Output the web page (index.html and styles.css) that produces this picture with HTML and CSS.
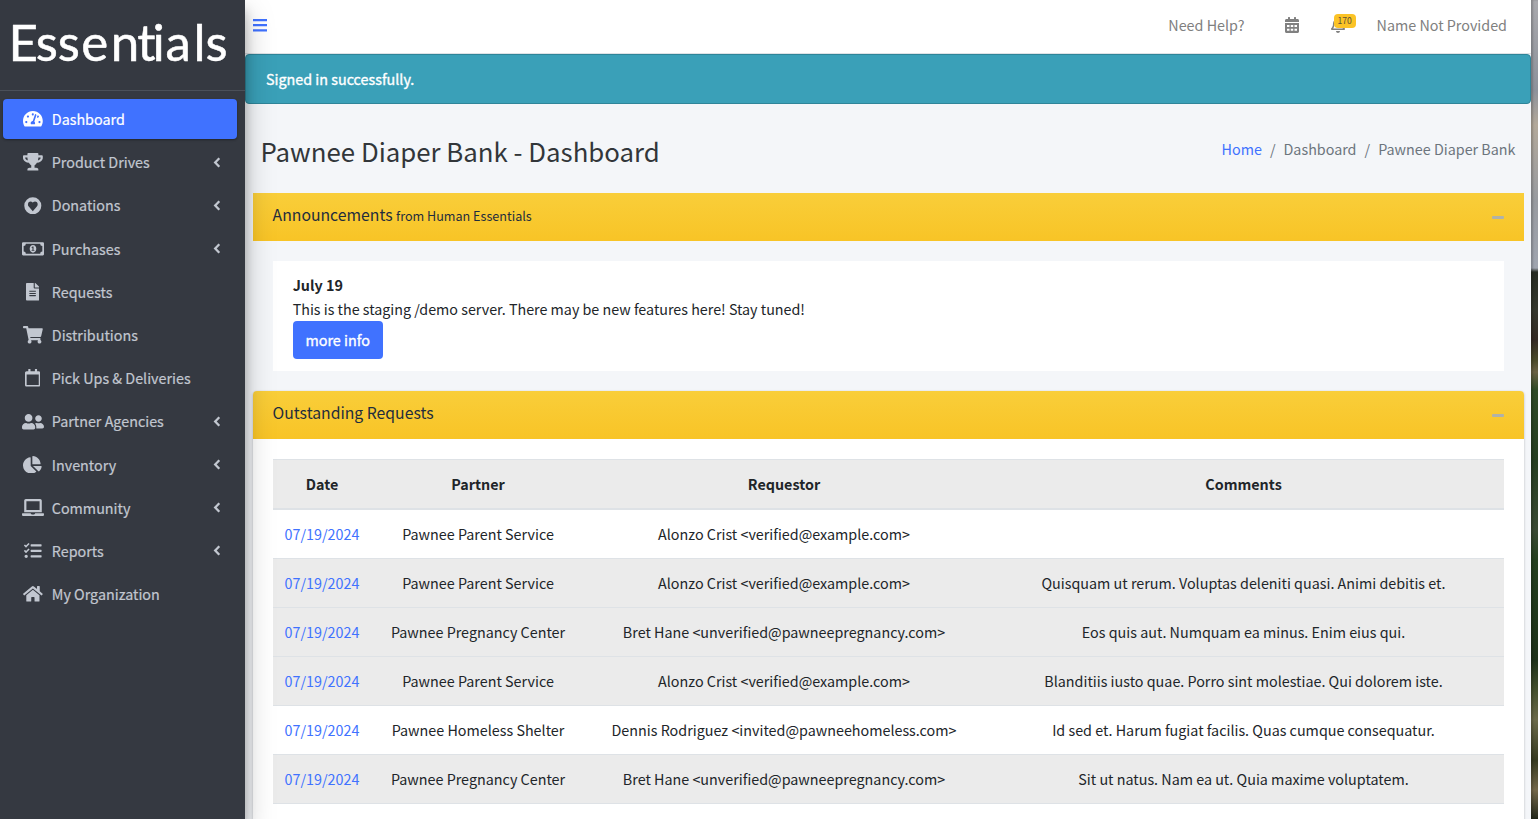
FILE: index.html
```html
<!DOCTYPE html>
<html lang="en">
<head>
<meta charset="utf-8">
<title>Pawnee Diaper Bank - Dashboard</title>
<link rel="stylesheet" href="styles.css">
</head>
<body>
<div class="app">
  <aside class="sidebar">
    <div class="brand">
      <svg class="logo" width="220" height="60" viewBox="0 0 220 60"><text y="47.500" x="0.500 27.700 49.700 73.200 102.800 129.200 144.500 157.500 185.500 197.600">Essentials</text></svg>
    </div>
    <nav class="menu">
      <a class="item active"><span class="ico"><svg viewBox="0 0 576 512"><path d="M288 32C128.940 32 0 160.940 0 320c0 52.800 14.250 102.260 39.060 144.800 5.610 9.620 16.300 15.200 27.440 15.200h443c11.140 0 21.830-5.580 27.440-15.200C561.750 422.260 576 372.800 576 320c0-159.060-128.940-288-288-288zm0 64c14.710 0 26.580 10.130 30.320 23.650-1.110 2.260-2.640 4.230-3.450 6.670l-9.220 27.670c-5.130 3.490-10.970 6.010-17.640 6.010-17.670 0-32-14.330-32-32S270.330 96 288 96zM96 384c-17.670 0-32-14.330-32-32s14.330-32 32-32 32 14.330 32 32-14.330 32-32 32zm48-160c-17.670 0-32-14.330-32-32s14.330-32 32-32 32 14.330 32 32-14.330 32-32 32zm246.770-72.410l-61.330 184C343.130 347.330 352 364.540 352 384c0 11.720-3.380 22.550-8.880 32H232.880c-5.500-9.450-8.880-20.280-8.880-32 0-33.940 26.500-61.430 59.900-63.590l61.340-184.010c4.170-12.560 17.730-19.450 30.360-15.170 12.570 4.190 19.350 17.790 15.170 30.360zm14.660 57.200l15.520-46.550c3.470-1.290 7.130-2.230 11.050-2.230 17.670 0 32 14.330 32 32s-14.330 32-32 32c-11.380-.01-20.890-6.280-26.570-15.220zM480 384c-17.670 0-32-14.330-32-32s14.330-32 32-32 32 14.330 32 32-14.330 32-32 32z"/></svg></span><span class="lbl">Dashboard</span></a>
      <a class="item"><span class="ico"><svg viewBox="0 0 576 512"><path d="M552 64H448V24c0-13.300-10.700-24-24-24H152c-13.300 0-24 10.700-24 24v40H24C10.700 64 0 74.700 0 88v56c0 35.700 22.500 72.400 61.900 100.700 31.500 22.700 69.800 37.100 110 41.700C203.300 338.500 240 360 240 360v72h-48c-35.300 0-64 20.700-64 56v12c0 6.600 5.400 12 12 12h296c6.600 0 12-5.400 12-12v-12c0-35.300-28.700-56-64-56h-48v-72s36.700-21.500 68.100-73.600c40.300-4.600 78.600-19 110-41.700 39.300-28.300 61.900-65 61.900-100.700V88c0-13.300-10.700-24-24-24zM99.300 192.800C74.900 175.200 64 155.600 64 144v-16h64.200c1 32.600 5.800 61.200 12.800 86.200-15.100-5.200-29.200-12.400-41.700-21.400zM512 144c0 16.100-17.700 36.100-35.300 48.800-12.500 9-26.700 16.200-41.800 21.400 7-25 11.800-53.600 12.800-86.200H512v16z"/></svg></span><span class="lbl">Product Drives</span><svg class="chev" viewBox="0 0 8 11"><path d="M6.300 1.300 2.200 5.500l4.100 4.200"/></svg></a>
      <a class="item"><span class="ico"><svg viewBox="0 0 512 512"><path fill-rule="evenodd" d="M256 8a248 248 0 1 0 0 496a248 248 0 1 0 0-496zM256 412 138 278c-34-36-30-98 5-130 32-26 78-22 104 8l9 10 9-10c28-30 74-34 105-8 36 32 38 94 4 130z"/></svg></span><span class="lbl">Donations</span><svg class="chev" viewBox="0 0 8 11"><path d="M6.300 1.300 2.200 5.500l4.100 4.200"/></svg></a>
      <a class="item"><span class="ico"><svg viewBox="0 0 640 512"><path fill-rule="evenodd" d="M32 64h576a32 32 0 0 1 32 32v320a32 32 0 0 1-32 32H32a32 32 0 0 1-32-32V96a32 32 0 0 1 32-32zM112 112a64 64 0 0 1-64 64v160a64 64 0 0 1 64 64h416a64 64 0 0 1 64-64V176a64 64 0 0 1-64-64zM320 144c53 0 96 50 96 112s-43 112-96 112-96-50-96-112 43-112 96-112zm-12 48-30 18 9 22 17-6v62h-24v24h80v-24h-24v-96z"/></svg></span><span class="lbl">Purchases</span><svg class="chev" viewBox="0 0 8 11"><path d="M6.300 1.300 2.200 5.500l4.100 4.200"/></svg></a>
      <a class="item"><span class="ico"><svg viewBox="0 0 384 512"><path d="M224 136V0H24C10.700 0 0 10.700 0 24v464c0 13.300 10.700 24 24 24h336c13.300 0 24-10.700 24-24V160H248c-13.200 0-24-10.800-24-24zm64 236c0 6.600-5.400 12-12 12H108c-6.600 0-12-5.400-12-12v-8c0-6.600 5.400-12 12-12h168c6.600 0 12 5.400 12 12v8zm0-64c0 6.600-5.400 12-12 12H108c-6.600 0-12-5.400-12-12v-8c0-6.600 5.400-12 12-12h168c6.600 0 12 5.400 12 12v8zm0-72v8c0 6.600-5.400 12-12 12H108c-6.600 0-12-5.400-12-12v-8c0-6.600 5.400-12 12-12h168c6.600 0 12 5.400 12 12zm96-114.100v6.100H256V0h6.100c6.400 0 12.500 2.500 17 7l97.900 98c4.500 4.500 7 10.600 7 16.900z"/></svg></span><span class="lbl">Requests</span></a>
      <a class="item"><span class="ico"><svg viewBox="0 0 576 512"><path d="M528.120 301.319l47.273-208C578.806 78.301 567.391 64 551.990 64H159.208l-9.166-44.810C147.758 8.021 137.930 0 126.529 0H24C10.745 0 0 10.745 0 24v16c0 13.255 10.745 24 24 24h69.883l70.248 343.435C147.325 417.100 136 435.222 136 456c0 30.928 25.072 56 56 56s56-25.072 56-56c0-15.674-6.447-29.835-16.824-40h209.647C430.447 426.165 424 440.326 424 456c0 30.928 25.072 56 56 56s56-25.072 56-56c0-22.172-12.888-41.332-31.579-50.405l5.517-24.276c3.413-15.018-8.002-29.319-23.403-29.319H218.117l-6.545-32h293.145c11.206 0 20.920-7.754 23.403-18.681z"/></svg></span><span class="lbl">Distributions</span></a>
      <a class="item"><span class="ico"><svg viewBox="0 0 448 512"><path d="M400 64h-48V12c0-6.600-5.400-12-12-12h-40c-6.600 0-12 5.400-12 12v52H160V12c0-6.600-5.400-12-12-12h-40c-6.600 0-12 5.400-12 12v52H48C21.500 64 0 85.500 0 112v352c0 26.500 21.500 48 48 48h352c26.500 0 48-21.500 48-48V112c0-26.500-21.500-48-48-48zm-6 400H54c-3.300 0-6-2.700-6-6V160h352v298c0 3.300-2.700 6-6 6z"/></svg></span><span class="lbl">Pick Ups &amp; Deliveries</span></a>
      <a class="item"><span class="ico"><svg viewBox="0 0 640 512"><path d="M192 256c61.900 0 112-50.100 112-112S253.900 32 192 32 80 82.100 80 144s50.100 112 112 112zm76.800 32h-8.300c-20.800 10-43.900 16-68.500 16s-47.600-6-68.500-16h-8.300C51.600 288 0 339.600 0 403.200V432c0 26.500 21.500 48 48 48h288c26.500 0 48-21.500 48-48v-28.800c0-63.600-51.600-115.200-115.200-115.200zM480 256c53 0 96-43 96-96s-43-96-96-96-96 43-96 96 43 96 96 96zm48 32h-3.800c-13.900 4.800-28.600 8-44.200 8s-30.300-3.200-44.200-8H432c-20.400 0-39.200 5.900-55.700 15.400 24.400 26.300 39.700 61.200 39.700 99.800v38.400c0 2.200-.5 4.300-.6 6.400H592c26.500 0 48-21.500 48-48 0-61.900-50.100-112-112-112z"/></svg></span><span class="lbl">Partner Agencies</span><svg class="chev" viewBox="0 0 8 11"><path d="M6.300 1.300 2.200 5.500l4.100 4.200"/></svg></a>
      <a class="item"><span class="ico"><svg viewBox="0 0 544 512"><path d="M527.790 288H290.500l158.030 158.030c6.040 6.040 15.980 6.530 22.190.68 38.700-36.460 65.320-85.610 73.130-140.860 1.340-9.460-6.510-17.850-16.060-17.850zm-15.830-64.800C503.720 103.740 408.260 8.280 288.800.04 279.680-.59 272 7.100 272 16.240V240h223.770c9.140 0 16.820-7.680 16.190-16.800zM224 288V50.710c0-9.550-8.390-17.400-17.840-16.060C86.990 51.490-4.100 155.600.14 280.370 4.500 408.510 114.830 513.590 243.030 511.980c50.400-.63 96.970-16.870 135.260-44.030 7.900-5.600 8.420-17.230 1.570-24.080L224 288z"/></svg></span><span class="lbl">Inventory</span><svg class="chev" viewBox="0 0 8 11"><path d="M6.300 1.300 2.200 5.500l4.100 4.200"/></svg></a>
      <a class="item"><span class="ico"><svg viewBox="0 0 640 512"><path d="M624 416H381.540c-.74 19.810-14.710 32-32.740 32H288c-18.690 0-33.020-17.470-32.770-32H16c-8.800 0-16 7.200-16 16v16c0 35.200 28.800 64 64 64h512c35.200 0 64-28.800 64-64v-16c0-8.800-7.200-16-16-16zM576 48c0-26.400-21.600-48-48-48H112C85.600 0 64 21.600 64 48v336h512V48zm-64 272H128V64h384v256z"/></svg></span><span class="lbl">Community</span><svg class="chev" viewBox="0 0 8 11"><path d="M6.300 1.300 2.200 5.500l4.100 4.200"/></svg></a>
      <a class="item"><span class="ico"><svg viewBox="0 0 512 512"><path d="M139.610 35.500a12 12 0 0 0-17 0L58.930 98.810l-22.700-22.120a12 12 0 0 0-17 0L3.530 92.410a12 12 0 0 0 0 17l47.590 47.400a12.780 12.780 0 0 0 17.610 0l15.590-15.620L156.520 69a12.090 12.090 0 0 0 .09-17zm0 159.190a12 12 0 0 0-17 0l-63.680 63.720-22.700-22.100a12 12 0 0 0-17 0L3.530 252a12 12 0 0 0 0 17L51 316.500a12.770 12.770 0 0 0 17.600 0l15.700-15.690 72.200-72.220a12 12 0 0 0 .09-16.900zM64 368c-26.490 0-48.590 21.500-48.590 48S37.530 464 64 464a48 48 0 0 0 0-96zm432 16H208a16 16 0 0 0-16 16v32a16 16 0 0 0 16 16h288a16 16 0 0 0 16-16v-32a16 16 0 0 0-16-16zm0-320H208a16 16 0 0 0-16 16v32a16 16 0 0 0 16 16h288a16 16 0 0 0 16-16V80a16 16 0 0 0-16-16zm0 160H208a16 16 0 0 0-16 16v32a16 16 0 0 0 16 16h288a16 16 0 0 0 16-16v-32a16 16 0 0 0-16-16z"/></svg></span><span class="lbl">Reports</span><svg class="chev" viewBox="0 0 8 11"><path d="M6.300 1.300 2.200 5.500l4.100 4.200"/></svg></a>
      <a class="item"><span class="ico"><svg viewBox="0 0 576 512"><path d="M280.370 148.260L96 300.110V464a16 16 0 0 0 16 16l112.060-.29a16 16 0 0 0 15.920-16V368a16 16 0 0 1 16-16h64a16 16 0 0 1 16 16v95.640a16 16 0 0 0 16 16.050L464 480a16 16 0 0 0 16-16V300L295.670 148.260a12.190 12.190 0 0 0-15.300 0zM571.600 251.470L488 182.560V44.050a12 12 0 0 0-12-12h-56a12 12 0 0 0-12 12v72.610L318.470 43a48 48 0 0 0-61 0L4.340 251.470a12 12 0 0 0-1.600 16.900l25.500 31A12 12 0 0 0 45.150 301l235.220-193.740a12.190 12.190 0 0 1 15.300 0L530.900 301a12 12 0 0 0 16.900-1.600l25.500-31a12 12 0 0 0-1.700-16.930z"/></svg></span><span class="lbl">My Organization</span></a>
    </nav>
  </aside>
  <div class="page">
    <header class="topbar">
      <svg class="bars" width="14" height="13" viewBox="0 0 14 13"><path d="M0 0h14v2.200H0zM0 5h14v2.200H0zM0 10.200h14v2.200H0z"/></svg>
      <div class="topnav">
        <span class="help">Need Help?</span>
        <svg class="cal" width="14" height="16" viewBox="0 0 448 512"><path fill-rule="evenodd" d="M0 464c0 26.500 21.500 48 48 48h352c26.500 0 48-21.500 48-48V192H0zM64 256h80v64H64zm120 0h80v64h-80zm120 0h80v64h-80zM64 376h80v64H64zm120 0h80v64h-80zm120 0h80v64h-80zM400 64h-48V16c0-8.800-7.200-16-16-16h-32c-8.800 0-16 7.200-16 16v48H160V16c0-8.800-7.200-16-16-16h-32c-8.800 0-16 7.200-16 16v48H48C21.500 64 0 85.500 0 112v48h448v-48c0-26.500-21.500-48-48-48z"/></svg>
        <span class="bell"><svg width="14" height="16" viewBox="0 0 448 512"><path d="M439.390 362.290c-19.320-20.760-55.470-51.990-55.470-154.290 0-77.700-54.480-139.900-127.940-155.160V32c0-17.670-14.320-32-31.980-32s-31.980 14.330-31.980 32v20.840C118.560 68.100 64.080 130.300 64.080 208c0 102.300-36.150 133.530-55.470 154.290-6 6.450-8.660 14.160-8.610 21.710.11 16.400 12.980 32 32.100 32h383.800c19.120 0 32-15.600 32.100-32 .05-7.550-2.610-15.270-8.610-21.710zM67.530 368c21.220-27.970 44.420-74.330 44.530-159.420 0-.2-.06-.38-.06-.58 0-61.860 50.140-112 112-112s112 50.140 112 112c0 .2-.06.38-.06.58.11 85.100 23.310 131.460 44.530 159.420H67.530zM224 512c35.320 0 63.970-28.650 63.970-64H160.030c0 35.350 28.650 64 63.970 64z"/></svg><span class="badge">170</span></span>
        <span class="user">Name Not Provided</span>
      </div>
    </header>
    <div class="alert">Signed in successfully.</div>
    <div class="heading">
      <h1>Pawnee Diaper Bank - Dashboard</h1>
      <div class="crumbs"><a>Home</a><i>/</i><span>Dashboard</span><i>/</i><span>Pawnee Diaper Bank</span></div>
    </div>
    <main class="content">
      <section class="news">
        <div class="bar"><h3>Announcements <small>from Human Essentials</small></h3><span class="minus"></span></div>
        <div class="note">
          <b>July 19</b>
          <p>This is the staging /demo server. There may be new features here! Stay tuned!</p>
          <a class="btn">more info</a>
        </div>
      </section>
      <section class="card">
        <div class="bar"><h3>Outstanding Requests</h3><span class="minus"></span></div>
        <div class="card-body">
          <table>
            <colgroup><col class="c1"><col class="c2"><col class="c3"><col class="c4"></colgroup>
            <thead><tr><th>Date</th><th>Partner</th><th>Requestor</th><th>Comments</th></tr></thead>
            <tbody>
              <tr><td><a>07/19/2024</a></td><td>Pawnee Parent Service</td><td>Alonzo Crist &lt;verified@example.com&gt;</td><td></td></tr>
              <tr class="alt"><td><a>07/19/2024</a></td><td>Pawnee Parent Service</td><td>Alonzo Crist &lt;verified@example.com&gt;</td><td>Quisquam ut rerum. Voluptas deleniti quasi. Animi debitis et.</td></tr>
              <tr class="alt"><td><a>07/19/2024</a></td><td>Pawnee Pregnancy Center</td><td>Bret Hane &lt;unverified@pawneepregnancy.com&gt;</td><td>Eos quis aut. Numquam ea minus. Enim eius qui.</td></tr>
              <tr class="alt"><td><a>07/19/2024</a></td><td>Pawnee Parent Service</td><td>Alonzo Crist &lt;verified@example.com&gt;</td><td>Blanditiis iusto quae. Porro sint molestiae. Qui dolorem iste.</td></tr>
              <tr><td><a>07/19/2024</a></td><td>Pawnee Homeless Shelter</td><td>Dennis Rodriguez &lt;invited@pawneehomeless.com&gt;</td><td>Id sed et. Harum fugiat facilis. Quas cumque consequatur.</td></tr>
              <tr class="alt"><td><a>07/19/2024</a></td><td>Pawnee Pregnancy Center</td><td>Bret Hane &lt;unverified@pawneepregnancy.com&gt;</td><td>Sit ut natus. Nam ea ut. Quia maxime voluptatem.</td></tr>
            </tbody>
          </table>
        </div>
      </section>
    </main>
  </div>
  <div class="backdrop"></div>
</div>
</body>
</html>
```
FILE: styles.css
```css
* { box-sizing: border-box; }
body {
  margin: 0;
  font-family: "Noto Sans CJK JP", "Noto Sans", sans-serif;
  font-size: 14.33px;
  line-height: 24px;
  color: #212529;
  overflow: hidden;
}
h1, h3, p { margin: 0; font-weight: 400; }
.app { display: flex; height: 819px; overflow: hidden; }

/* Sidebar */
.sidebar {
  width: 245px;
  flex: none;
  background: #353941;
  box-shadow: 0 14px 28px rgba(0,0,0,.25), 0 10px 10px rgba(0,0,0,.22);
  z-index: 2;
}
.brand { height: 91px; padding: 13px 0 0 8px; border-bottom: 1px solid #4b5059; }
.logo { display: block; overflow: visible; }
.logo text {
  font-family: Lato, sans-serif;
  font-size: 51px;
  fill: #fff;
  stroke: #fff;
  stroke-width: .5;
  stroke-linejoin: round;
}
.menu { padding: 8px 8px 0 3px; display: flex; flex-direction: column; gap: 3.200px; }
.item {
  display: flex;
  align-items: center;
  height: 40px;
  padding: 0 16px 0 17px;
  border-radius: 4px;
  color: #c2c7d0;
  -webkit-text-stroke: .2px currentColor;
}
.active {
  background: #4072ff;
  color: #fff;
  box-shadow: 0 1px 3px rgba(0,0,0,.12), 0 1px 2px rgba(0,0,0,.24);
}
.ico { width: 25.600px; margin-right: 6.200px; display: flex; justify-content: center; }
.ico svg { height: 17.600px; width: auto; fill: currentColor; }
.lbl { flex: 1; white-space: nowrap; }
.chev { width: 8px; height: 11px; fill: none; stroke: currentColor; stroke-width: 2.300; }

/* Main column */
.page { width: 1286px; flex: none; background: #f4f6f9; }
.topbar {
  height: 54px;
  background: #fff;
  border-bottom: 1px solid #dee2e6;
  display: flex;
  align-items: center;
  justify-content: space-between;
  padding: 0 24px 3px 8px;
  color: #808080;
}
.bars { fill: #4072ff; }
.topnav { display: flex; align-items: center; }
.topnav svg { fill: #808080; display: block; }
.cal { margin: 0 32px 0 40px; }
.bell { position: relative; margin-right: 32px; }
.badge {
  position: absolute;
  left: 3px;
  top: -3px;
  width: 22px;
  height: 14px;
  border-radius: 4px;
  background: #fbc326;
  color: #5a5138;
  font-size: 8.600px;
  line-height: 12px;
  text-align: center;
}
.alert {
  height: 50px;
  padding: 12px 20px;
  background: #3aa0b8;
  border: 1px solid #2f8599;
  border-radius: 4px;
  color: #fff;
  -webkit-text-stroke: .35px #fff;
}
.heading {
  height: 89px;
  padding: 0 15.500px;
  display: flex;
  justify-content: space-between;
  align-items: center;
}
h1 { font-size: 25.800px; line-height: 36px; padding-top: 4px; color: #32363a; }
.crumbs { display: flex; gap: 8px; color: #6c757d; }
.crumbs i { font-style: normal; }
a { color: #4072ff; }

/* Panels */
.content { padding: 0 7px 0 8px; }
.bar {
  height: 48px;
  padding: 0 20px 3px 19.600px;
  display: flex;
  justify-content: space-between;
  align-items: center;
  background: linear-gradient(#f9ce3a, #f8c426);
  color: #1f2d3d;
}
h3 { font-size: 15.760px; }
.card h3 { padding-bottom: 1px; }
small { font-size: 12.600px; }
.minus { width: 12px; height: 3px; margin-top: 4px; border-radius: 1px; background: #b0b2a9; }
.note { height: 110px; margin: 20px; padding: 12px 20px 12px 19.700px; background: #fff; }
.note b { display: block; }
.note p { font-size: 14.310px; }
.btn {
  display: block;
  width: 90px;
  height: 38px;
  line-height: 38px;
  border-radius: 4px;
  background: #4072ff;
  color: #fff;
  text-align: center;
  -webkit-text-stroke: .35px #fff;
}
.card {
  height: 500px;
  border-radius: 4px;
  background: #fff;
  box-shadow: 0 0 1px rgba(0,0,0,.125), 0 1px 3px rgba(0,0,0,.2);
}
.card .bar { border-radius: 4px 4px 0 0; }
.card-body { padding: 20px; }
table { width: 1231px; table-layout: fixed; border-collapse: separate; border-spacing: 0; text-align: center; }
.c1 { width: 98px; }
.c2 { width: 214px; }
.c3 { width: 398px; }
th { height: 51px; padding: 0; background: #ebebeb; border-top: 1px solid #dee2e6; border-bottom: 2px solid #dee2e6; }
td { height: 49px; padding: 0; border-bottom: 1px solid #dee2e6; white-space: nowrap; }
.alt td { background: #ebebeb; }

/* Strip of landscape visible beside the window */
.backdrop {
  flex: 1;
  background: linear-gradient(#a9a9ad 0, #8d929b 90px, #b3a99a 125px, #989ba0 200px, #a0a5b0 268px, #262b22 272px, #35382e 310px, #332a24 340px, #4a4a2a 360px, #6b6245 372px, #2f4a26 390px, #263f20 460px, #3a4a34 530px, #24401f 560px, #1d3119 660px, #44502e 690px, #6b6a4a 720px, #35391f 760px, #74684a 790px, #23281a 819px);
  box-shadow: inset 2px 0 2px rgba(0,0,0,.2);
}
```
